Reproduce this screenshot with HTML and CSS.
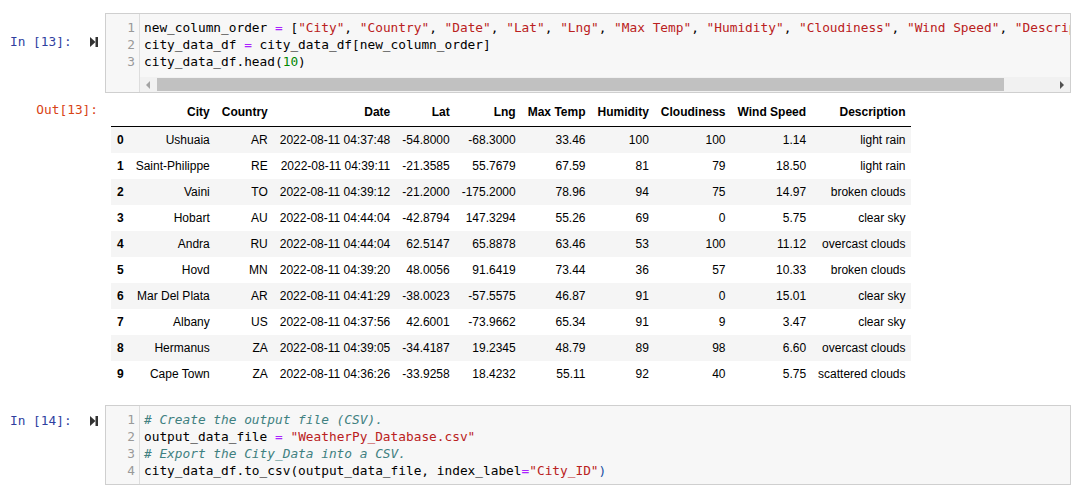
FILE: index.html
```html
<!DOCTYPE html>
<html>
<head>
<meta charset="utf-8">
<link rel="stylesheet" href="styles.css">
</head>
<body>
<div class="notebook">
  <div class="cell code-cell">
    <div class="in-prompt">
      <span class="prompt-text">In&nbsp;[13]:</span>
      <svg class="run-icon" width="8" height="10" viewBox="0 0 8 10"><path d="M0 0 L5.5 5 L0 10 Z" fill="#333"/><rect x="5.5" y="0" width="2.5" height="10" fill="#333"/></svg>
    </div>
    <div class="input-box">
      <div class="gutter">
        <div class="ln">1</div><div class="ln">2</div><div class="ln">3</div>
      </div>
      <div class="code-col">
        <div class="code-lines">
          <div class="line">new_column_order <span class="op">=</span> [<span class="str">"City"</span>, <span class="str">"Country"</span>, <span class="str">"Date"</span>, <span class="str">"Lat"</span>, <span class="str">"Lng"</span>, <span class="str">"Max Temp"</span>, <span class="str">"Humidity"</span>, <span class="str">"Cloudiness"</span>, <span class="str">"Wind Speed"</span>, <span class="str">"Description"</span>]</div>
          <div class="line">city_data_df <span class="op">=</span> city_data_df[new_column_order]</div>
          <div class="line">city_data_df.head(<span class="num">10</span>)</div>
        </div>
        <div class="hscroll">
          <span class="arrow-left"></span>
          <div class="thumb-track"><div class="thumb"></div></div>
          <span class="arrow-right"></span>
        </div>
      </div>
    </div>
  </div>

  <div class="cell output-cell">
    <div class="out-prompt">Out[13]:</div>
    <div class="output-area">
      <table class="dataframe">
        <thead>
          <tr><th></th><th>City</th><th>Country</th><th>Date</th><th>Lat</th><th>Lng</th><th>Max Temp</th><th>Humidity</th><th>Cloudiness</th><th>Wind Speed</th><th>Description</th></tr>
        </thead>
        <tbody>
          <tr><th>0</th><td>Ushuaia</td><td>AR</td><td>2022-08-11 04:37:48</td><td>-54.8000</td><td>-68.3000</td><td>33.46</td><td>100</td><td>100</td><td>1.14</td><td>light rain</td></tr>
          <tr><th>1</th><td>Saint-Philippe</td><td>RE</td><td>2022-08-11 04:39:11</td><td>-21.3585</td><td>55.7679</td><td>67.59</td><td>81</td><td>79</td><td>18.50</td><td>light rain</td></tr>
          <tr><th>2</th><td>Vaini</td><td>TO</td><td>2022-08-11 04:39:12</td><td>-21.2000</td><td>-175.2000</td><td>78.96</td><td>94</td><td>75</td><td>14.97</td><td>broken clouds</td></tr>
          <tr><th>3</th><td>Hobart</td><td>AU</td><td>2022-08-11 04:44:04</td><td>-42.8794</td><td>147.3294</td><td>55.26</td><td>69</td><td>0</td><td>5.75</td><td>clear sky</td></tr>
          <tr><th>4</th><td>Andra</td><td>RU</td><td>2022-08-11 04:44:04</td><td>62.5147</td><td>65.8878</td><td>63.46</td><td>53</td><td>100</td><td>11.12</td><td>overcast clouds</td></tr>
          <tr><th>5</th><td>Hovd</td><td>MN</td><td>2022-08-11 04:39:20</td><td>48.0056</td><td>91.6419</td><td>73.44</td><td>36</td><td>57</td><td>10.33</td><td>broken clouds</td></tr>
          <tr><th>6</th><td>Mar Del Plata</td><td>AR</td><td>2022-08-11 04:41:29</td><td>-38.0023</td><td>-57.5575</td><td>46.87</td><td>91</td><td>0</td><td>15.01</td><td>clear sky</td></tr>
          <tr><th>7</th><td>Albany</td><td>US</td><td>2022-08-11 04:37:56</td><td>42.6001</td><td>-73.9662</td><td>65.34</td><td>91</td><td>9</td><td>3.47</td><td>clear sky</td></tr>
          <tr><th>8</th><td>Hermanus</td><td>ZA</td><td>2022-08-11 04:39:05</td><td>-34.4187</td><td>19.2345</td><td>48.79</td><td>89</td><td>98</td><td>6.60</td><td>overcast clouds</td></tr>
          <tr><th>9</th><td>Cape Town</td><td>ZA</td><td>2022-08-11 04:36:26</td><td>-33.9258</td><td>18.4232</td><td>55.11</td><td>92</td><td>40</td><td>5.75</td><td>scattered clouds</td></tr>
        </tbody>
      </table>
    </div>
  </div>

  <div class="cell code-cell second">
    <div class="in-prompt">
      <span class="prompt-text">In&nbsp;[14]:</span>
      <svg class="run-icon" width="8" height="10" viewBox="0 0 8 10"><path d="M0 0 L5.5 5 L0 10 Z" fill="#333"/><rect x="5.5" y="0" width="2.5" height="10" fill="#333"/></svg>
    </div>
    <div class="input-box">
      <div class="gutter">
        <div class="ln">1</div><div class="ln">2</div><div class="ln">3</div><div class="ln">4</div>
      </div>
      <div class="code-col">
        <div class="code-lines last">
          <div class="line"><span class="cmt"># Create the output file (CSV).</span></div>
          <div class="line">output_data_file <span class="op">=</span> <span class="str">"WeatherPy_Database.csv"</span></div>
          <div class="line"><span class="cmt"># Export the City_Data into a CSV.</span></div>
          <div class="line">city_data_df.to_csv(output_data_file, index_label<span class="op">=</span><span class="str">"City_ID"</span><span class="br">)</span></div>
        </div>
      </div>
    </div>
  </div>
</div>
</body>
</html>
```

FILE: styles.css
```css
html, body {
  margin: 0;
  padding: 0;
  background: #fff;
}

.notebook {
  padding-top: 13px;
  width: 1078px;
}

.cell {
  display: flex;
  align-items: flex-start;
}

.in-prompt {
  width: 105px;
  flex: none;
  display: flex;
  align-items: center;
  padding-top: 20px;
  height: 17px;
  box-sizing: content-box;
  font-family: "DejaVu Sans Mono", monospace;
  font-size: 12.8px;
  color: #303F9F;
}

.prompt-text {
  padding-left: 10px;
  line-height: 17px;
}

.run-icon {
  margin-left: auto;
  margin-right: 7px;
  display: block;
}

.input-box {
  width: 966px;
  flex: none;
  display: flex;
  border: 1px solid #cfcfcf;
  background: #f7f7f7;
  box-sizing: border-box;
}

.gutter {
  width: 33px;
  flex: none;
  border-right: 1px solid #ddd;
  padding-top: 5px;
  font-family: "DejaVu Sans Mono", monospace;
  font-size: 12.8px;
  color: #999;
  text-align: right;
}

.ln {
  height: 17px;
  line-height: 17px;
  padding-right: 4px;
}

.code-col {
  flex: 1;
  min-width: 0;
  overflow: hidden;
}

.code-lines {
  padding: 5px 0 7px 4px;
  font-family: "DejaVu Sans Mono", monospace;
  font-size: 12.8px;
  color: #000;
}

.code-lines.last {
  padding-bottom: 5px;
}

.line {
  height: 17px;
  line-height: 17px;
  white-space: pre;
}

.str { color: #BA2121; }
.op { color: #AA22FF; }
.num { color: #008800; }
.cmt { color: #408080; font-style: italic; }
.br { color: #1a4fa3; }

.hscroll {
  height: 15px;
  background: #f1f1f1;
  display: flex;
  align-items: center;
}

.arrow-left {
  width: 0;
  height: 0;
  border-top: 4px solid transparent;
  border-bottom: 4px solid transparent;
  border-right: 4px solid #a3a3a3;
  margin-left: 6px;
  flex: none;
}

.thumb-track {
  flex: 1;
  height: 13px;
  padding-left: 7px;
  padding-right: 56px;
}

.thumb {
  height: 13px;
  background: #c1c1c1;
}

.arrow-right {
  width: 0;
  height: 0;
  border-top: 4px solid transparent;
  border-bottom: 4px solid transparent;
  border-left: 4px solid #505050;
  margin-right: 6px;
  flex: none;
}

/* output */
.output-cell {
  margin-top: 5px;
}

.out-prompt {
  width: 105px;
  flex: none;
  box-sizing: border-box;
  padding-right: 7px;
  padding-top: 3px;
  text-align: right;
  font-family: "DejaVu Sans Mono", monospace;
  font-size: 12.8px;
  line-height: 17px;
  color: #D84315;
}

.output-area {
  padding-left: 6px;
}

.dataframe {
  border: none;
  border-collapse: collapse;
  border-spacing: 0;
  font-family: "Liberation Sans", Arial, sans-serif;
  font-size: 12px;
  color: #000;
}

.dataframe th,
.dataframe td {
  text-align: right;
  vertical-align: middle;
  padding: 6px;
  line-height: 14px;
  white-space: nowrap;
  border: none;
}

.dataframe thead th {
  padding-top: 7px;
  padding-bottom: 7px;
}

.dataframe th {
  font-weight: bold;
}

.dataframe thead {
  border-bottom: 1px solid #000;
}

.dataframe tbody th {
  text-align: left;
}

.dataframe tbody tr:nth-child(odd) {
  background: #f5f5f5;
}

.second {
  margin-top: 18px;
}

.second .in-prompt {
  padding-top: 7px;
}
```
